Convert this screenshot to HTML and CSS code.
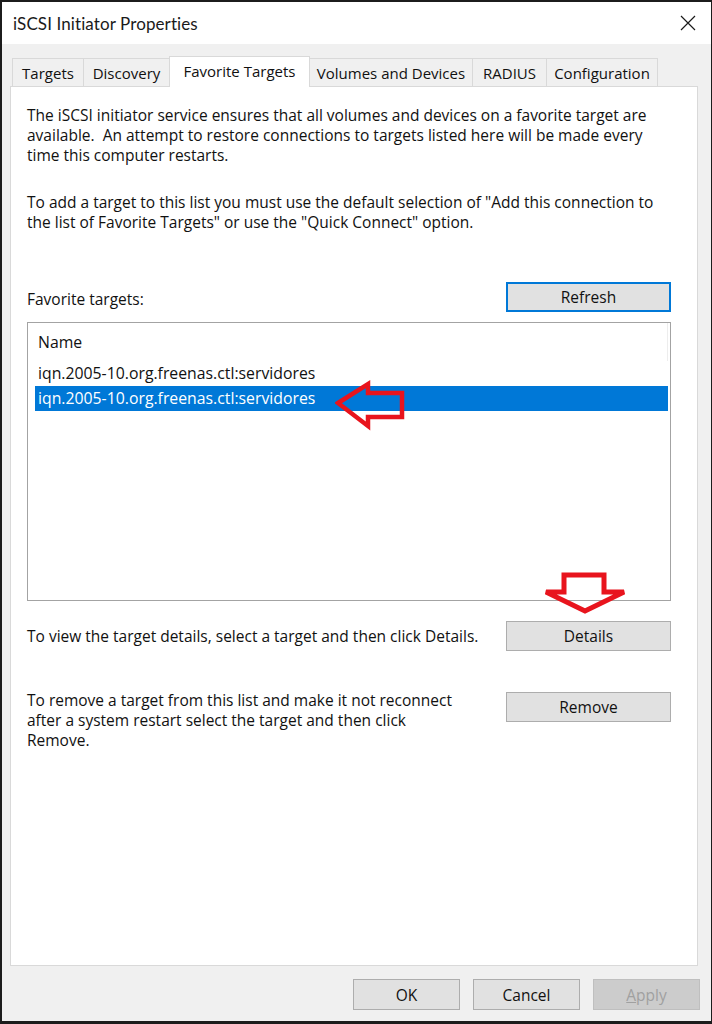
FILE: index.html
```html
<!DOCTYPE html>
<html lang="en">
<head>
<meta charset="utf-8">
<title>iSCSI Initiator Properties</title>
<link rel="stylesheet" href="styles.css">
</head>
<body>
<div class="window">
  <div class="titlebar">
    <span class="title">iSCSI Initiator Properties</span>
    <svg class="close" width="16" height="16" viewBox="0 0 16 16" aria-hidden="true">
      <path d="M1 1 L15 15 M15 1 L1 15" stroke="#1a1a1a" stroke-width="1.2" fill="none"/>
    </svg>
  </div>
  <div class="body">
    <div class="tabs">
      <div class="tab tab-targets">Targets</div>
      <div class="tab tab-discovery">Discovery</div>
      <div class="tab tab-favorite active">Favorite Targets</div>
      <div class="tab tab-volumes">Volumes and Devices</div>
      <div class="tab tab-radius">RADIUS</div>
      <div class="tab tab-config">Configuration</div>
    </div>
    <div class="panel">
      <p class="desc">The iSCSI initiator service ensures that all volumes and devices on a favorite target are<br>available.&nbsp; An attempt to restore connections to targets listed here will be made every<br>time this computer restarts.</p>
      <p class="desc second">To add a target to this list you must use the default selection of "Add this connection to<br>the list of Favorite Targets" or use the "Quick Connect" option.</p>
      <div class="fav-row">
        <span class="label">Favorite targets:</span>
        <button class="btn default">Refresh</button>
      </div>
      <div class="listbox">
        <div class="list-header"><span>Name</span></div>
        <div class="row">iqn.2005-10.org.freenas.ctl:servidores</div>
        <div class="row selected">iqn.2005-10.org.freenas.ctl:servidores</div>
      </div>
      <div class="action-row details-row">
        <span class="label">To view the target details, select a target and then click Details.</span>
        <button class="btn">Details</button>
      </div>
      <div class="action-row remove-row">
        <span class="label">To remove a target from this list and make it not reconnect<br>after a system restart select the target and then click<br>Remove.</span>
        <button class="btn">Remove</button>
      </div>
      <svg class="arrow-left" width="72" height="54" viewBox="0 0 72 54" aria-hidden="true">
        <polygon points="3,25 33,6 33,15 67,15 67,39 33,39 33,48" fill="none" stroke="#e8141d" stroke-width="4.5" stroke-linejoin="miter"/>
      </svg>
      <svg class="arrow-down" width="88" height="46" viewBox="0 0 88 46" aria-hidden="true">
        <polygon points="23,4 63,4 63,21 83,21 44,40 5,21 23,21" fill="none" stroke="#e8141d" stroke-width="5" stroke-linejoin="miter"/>
      </svg>
    </div>
    <div class="footer">
      <button class="btn foot">OK</button>
      <button class="btn foot">Cancel</button>
      <button class="btn foot disabled"><u>A</u>pply</button>
    </div>
  </div>
</div>
</body>
</html>
```

FILE: styles.css
```css
* { box-sizing: border-box; }

html, body {
  margin: 0;
  padding: 0;
}

body {
  width: 712px;
  height: 1024px;
  overflow: hidden;
  background: #1c1c1c;
  font-family: "Open Sans", "Noto Sans", "Liberation Sans", sans-serif;
  font-size: 15.5px;
  color: #111;
}

.window {
  width: 712px;
  height: 1024px;
  border-left: 2px solid #1c1c1c;
  border-top: 2px solid #1c1c1c;
  border-bottom: 3px solid #1c1c1c;
  border-right: 1px solid #1c1c1c;
  display: flex;
  flex-direction: column;
  background: #f0f0f0;
}

.titlebar {
  height: 42px;
  flex: none;
  background: #fff;
  display: flex;
  align-items: center;
  justify-content: space-between;
  padding: 0 15px 0 11px;
}

.title {
  font-family: "Lato", "Open Sans", sans-serif;
  font-size: 17px;
  color: #1a1a1a;
  letter-spacing: 0.1px;
}

.close {
  display: block;
}

.body {
  flex: 1;
  display: flex;
  flex-direction: column;
  padding: 12px 11px 0 8px;
}

.tabs {
  display: flex;
  align-items: flex-end;
  height: 30px;
  padding-left: 2px;
  position: relative;
  z-index: 2;
  font-size: 15px;
}

.tab {
  height: 28px;
  border: 1px solid #d9d9d9;
  border-bottom: none;
  background: #f0f0f0;
  display: flex;
  align-items: center;
  justify-content: center;
  padding-top: 1px;
  white-space: nowrap;
  margin-left: -1px;
}

.tab:first-child { margin-left: 0; }

.tab-targets { width: 72px; }
.tab-discovery { width: 87px; }
.tab-favorite { width: 141px; }
.tab-volumes { width: 164px; }
.tab-radius { width: 75px; }
.tab-config { width: 112px; }

.tab.active {
  height: 31px;
  background: #fff;
  padding-top: 0;
  padding-bottom: 3px;
  margin-bottom: -1px;
}

.panel {
  position: relative;
  width: 688px;
  height: 880px;
  background: #fff;
  border: 1px solid #d9d9d9;
  padding: 18px 26px 0 16px;
  display: flex;
  flex-direction: column;
}

.desc {
  margin: 0;
  line-height: 20px;
  white-space: nowrap;
}

.desc.second {
  margin-top: 27px;
}

.fav-row {
  margin-top: 50px;
  display: flex;
  justify-content: space-between;
  align-items: center;
}

.label {
  line-height: 20px;
}

.fav-row .label {
  padding-top: 3px;
}

.btn {
  font-family: inherit;
  font-size: 15.5px;
  color: #111;
  background: #e1e1e1;
  border: 1px solid #adadad;
  width: 165px;
  height: 30px;
  padding: 0;
  margin: 0;
  display: flex;
  align-items: center;
  justify-content: center;
}

.btn.default {
  border: 2px solid #0078d7;
}

.listbox {
  position: relative;
  margin-top: 10px;
  height: 279px;
  border: 1px solid #a3a3a3;
  padding: 0 2px 0 7px;
  font-size: 15.8px;
}

.list-header {
  height: 38px;
  padding: 7px 0 0 3px;
  line-height: 24px;
  border-right: 1px solid #ededed;
}

.row {
  height: 25px;
  line-height: 25px;
  padding-left: 3px;
  white-space: nowrap;
}

.row.selected {
  background: #0078d7;
  color: #fff;
}

.action-row {
  display: flex;
  justify-content: space-between;
}

.details-row {
  margin-top: 20px;
  align-items: center;
}

.remove-row {
  margin-top: 39px;
  align-items: flex-start;
}

.remove-row .btn {
  margin-top: 2px;
}

.arrow-left {
  position: absolute;
  left: 324px;
  top: 291px;
}

.arrow-down {
  position: absolute;
  left: 530px;
  top: 484px;
}

.footer {
  display: flex;
  justify-content: flex-end;
  gap: 13px;
  padding-top: 13px;
}

.btn.foot {
  width: 107px;
  height: 31px;
}

.btn.disabled {
  background: #cccccc;
  border-color: #bfbfbf;
  color: #a0a0a0;
}

.btn.disabled u {
  text-decoration: underline;
}
```
